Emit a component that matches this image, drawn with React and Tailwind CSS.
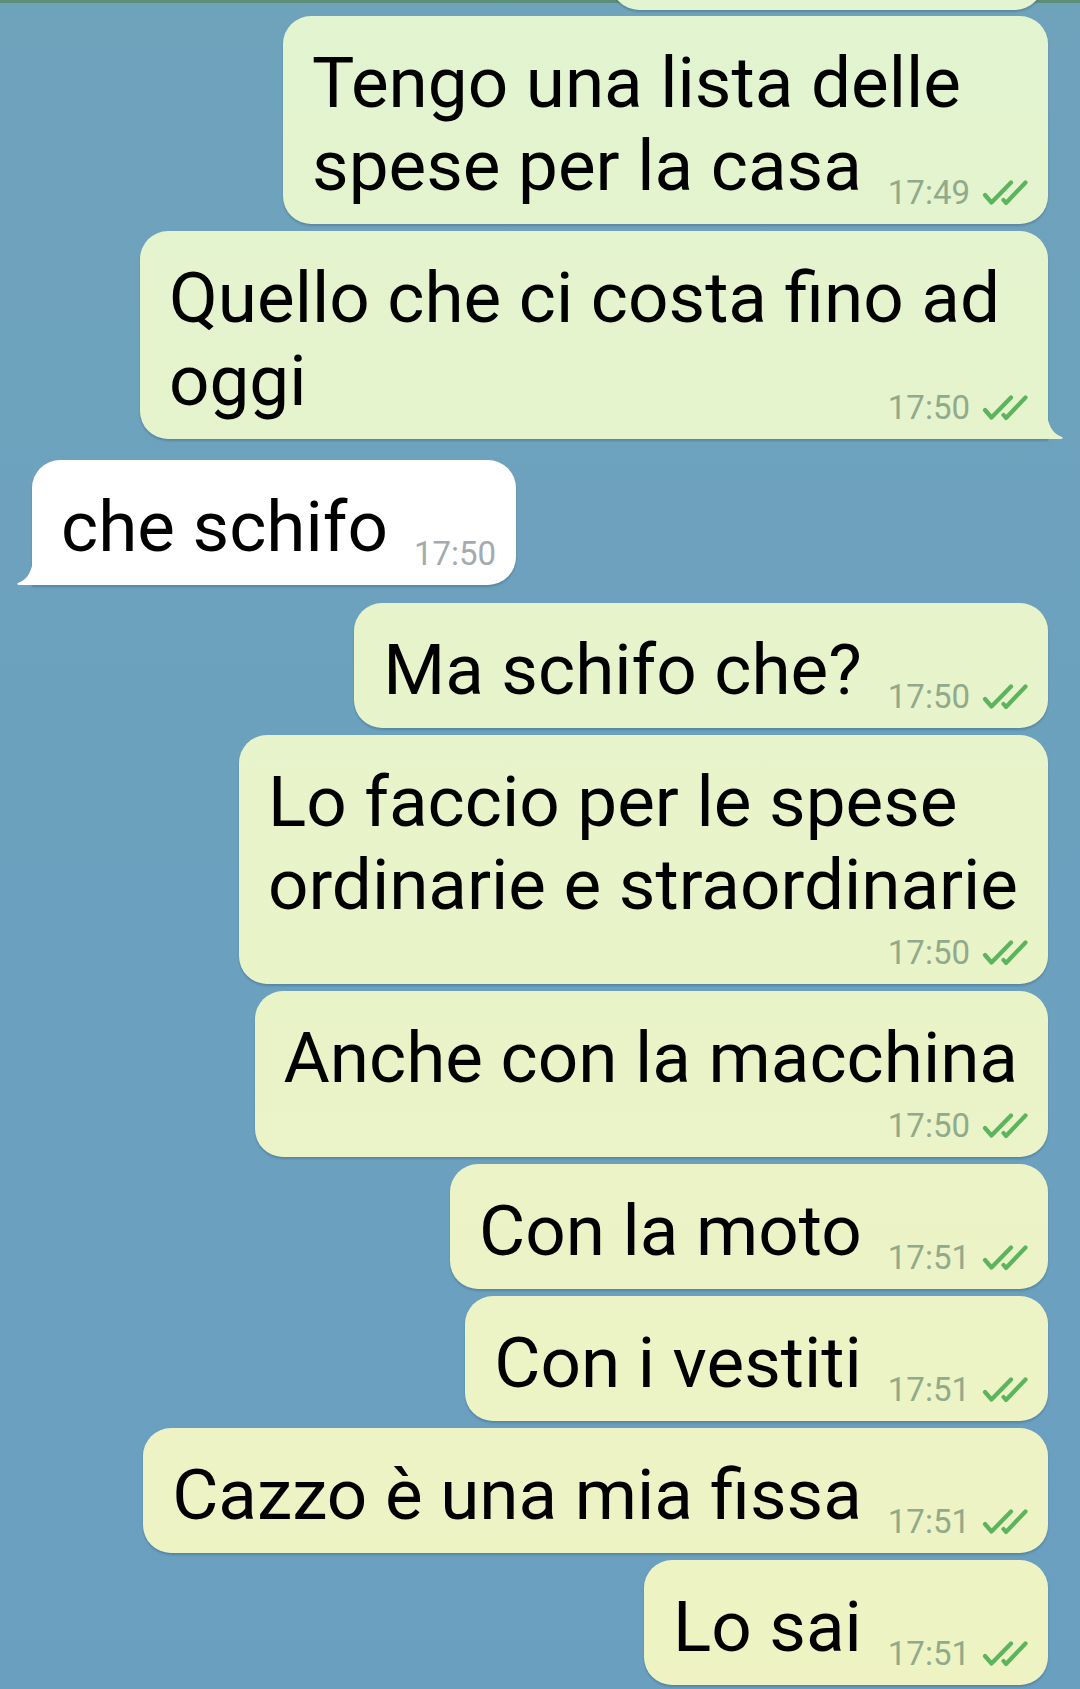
import React from 'react';

const messages = [
  { out: true, lines: ['Tengo una lista delle', 'spese per la casa'], time: '17:49' },
  { out: true, lines: ['Quello che ci costa fino ad', 'oggi'], time: '17:50', tail: true, extra: 'min-w-[908px]' },
  { out: false, lines: ['che schifo'], time: '17:50', tail: true, space: 'mt-[21px]' },
  { out: true, lines: ['Ma schifo che?'], time: '17:50', space: 'mt-[18px]' },
  { out: true, lines: ['Lo faccio per le spese', 'ordinarie e straordinarie'], time: '17:50', below: true },
  { out: true, lines: ['Anche con la macchina'], time: '17:50', below: true },
  { out: true, lines: ['Con la moto'], time: '17:51' },
  { out: true, lines: ['Con i vestiti'], time: '17:51' },
  { out: true, lines: ['Cazzo è una mia fissa'], time: '17:51' },
  { out: true, lines: ['Lo sai'], time: '17:51' },
];

const Checks = () => (
  <svg width="46" height="26" viewBox="0 0 46 26" className="ml-[12px] inline-block">
    <path d="M3 15 L9.5 22.5 L29 2.5" fill="none" stroke="#5cb45c" strokeWidth="4.2" strokeLinecap="round" strokeLinejoin="round" />
    <path d="M21.5 20 L24 23 L43.5 2.5" fill="none" stroke="#5cb45c" strokeWidth="4.2" strokeLinecap="round" strokeLinejoin="round" />
  </svg>
);

const Time = ({ out, time }) => (
  <span className={`-mb-[2px] flex items-center text-[33px] leading-none ${out ? 'text-[#91aa8b]' : 'text-[#a3abb0]'}`}>
    {time}
    {out && <Checks />}
  </span>
);

const Bubble = ({ out, lines, time, below, tail, extra = '', space = 'mt-[7px]' }) => {
  const head = lines.slice(0, -1);
  const last = lines[lines.length - 1];
  const bg = out
    ? 'bg-[linear-gradient(180deg,#e2f4d0_0%,#eff3c3_100%)] bg-fixed'
    : 'bg-white';
  const corner = tail ? (out ? 'rounded-br-none' : 'rounded-bl-none') : '';

  return (
    <div className={`flex ${out ? 'justify-end pr-[32px]' : 'justify-start pl-[32px]'} ${space}`}>
      <div
        className={`relative rounded-[28px] ${corner} ${bg} ${extra} pt-[25px] pb-[17px] pl-[29px] pr-[20px] shadow-[0_2px_2px_rgba(30,60,80,0.25)] whitespace-nowrap text-black text-[71px] leading-[83px]`}
      >
        <div className={below ? 'mr-[10px]' : ''}>
          {head.map((l) => (
            <div key={l}>{l}</div>
          ))}
          {below && <div>{last}</div>}
        </div>
        {below ? (
          <div className="flex h-[41px] items-end justify-end">
            <Time out={out} time={time} />
          </div>
        ) : (
          <div className="flex items-end justify-between">
            <span>{last}</span>
            <span className="ml-[26px]">
              <Time out={out} time={time} />
            </span>
          </div>
        )}
        {tail && out && (
          <svg width="17" height="27" viewBox="0 0 17 27" className="absolute bottom-0 right-[-16px]">
            <path d="M0 0 C0.5 12 5 21 14 24.6 C16.5 25.6 16 27 14 27 L0 27 Z" fill="#e5f4cd" />
          </svg>
        )}
        {tail && !out && (
          <svg width="17" height="27" viewBox="0 0 17 27" className="absolute bottom-0 left-[-16px]">
            <path d="M17 0 C16.5 12 12 21 3 24.6 C0.5 25.6 1 27 3 27 L17 27 Z" fill="#ffffff" />
          </svg>
        )}
      </div>
    </div>
  );
};

export default function App() {
  return (
    <div className="h-[1689px] w-[1080px] overflow-hidden bg-[linear-gradient(180deg,#6fa3bc_0%,#6ca1be_50%,#6a9fc0_100%)] font-[Roboto,'Noto_Sans',sans-serif]">
      <div className="h-[3px] bg-[#5b8f77]" />
      <div className="flex justify-end pr-[37px]">
        <div className="-mt-[118px] h-[125px] w-[432px] rounded-[28px] bg-[#e2f4d0] shadow-[0_2px_2px_rgba(30,60,80,0.25)]" />
      </div>
      <div>
        {messages.map((m, i) => (
          <Bubble key={i} {...m} space={i === 0 ? 'mt-[6px]' : m.space} />
        ))}
      </div>
    </div>
  );
}
